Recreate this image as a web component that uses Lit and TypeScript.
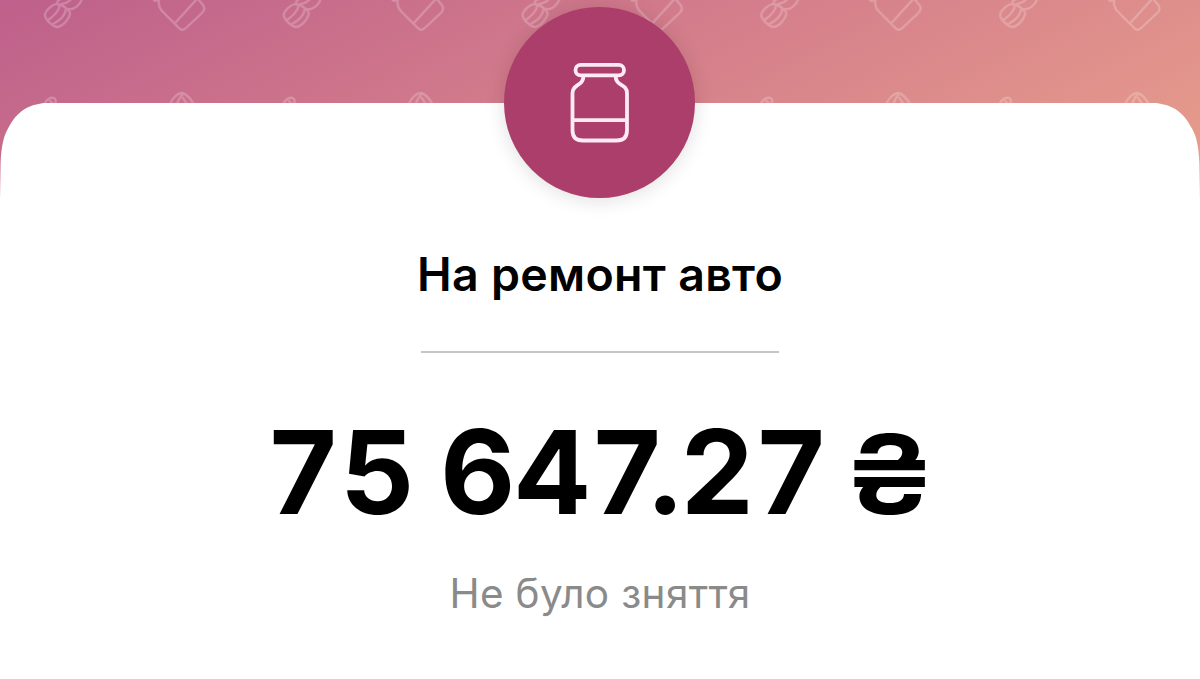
import { LitElement, html, css, svg } from 'lit';
import { customElement, property } from 'lit/decorators.js';

// Tiled doodles behind the card
@customElement('doodle-backdrop')
class DoodleBackdrop extends LitElement {
  static styles = css`
    :host {
      display: block;
    }
    svg {
      display: block;
      width: 100%;
      height: 100%;
    }
    .doodle {
      fill: none;
      stroke: #fff;
      stroke-width: 2.3;
      stroke-linecap: round;
      stroke-linejoin: round;
      opacity: 0.22;
    }
  `;

  renderTile() {
    return svg`
      <g class="doodle">
        <path d="M56 4 C52 5 46 10 45 14 C44 19 53 27 58 27 C63 26 69 19 70 14 C70 10 62 4 56 4 Z"></path>
        <path d="M60 5 C59 11 53 17 48 20 M66 9 C65 16 59 21 53 24"></path>
        <path d="M57 4 C57 1 58 0 61 -1 M62 4 C67 3 70 1 72 -2 M69 9 C74 10 80 5 82 -1"></path>
        <path d="M153 -1 L155 1 L159 0 C158 5 160 9 163 12 L178 27 Q182 32 186 28 L202 13 Q206 9 203 5 L198 -1 M176 22 L196 0"></path>
        <path d="M45 103 C47 99 51 97 54 98 C56 99 56 102 55 105 M50 101 L54 105"></path>
        <path d="M170 104 C172 98 178 93 182 93 C187 94 190 98 193 103 M177 104 C178 100 180 97 183 94 M183 98 L187 104"></path>
      </g>
    `;
  }

  render() {
    return html`
      <svg>
        <defs>
          <pattern id="tile" width="238.8" height="210" patternUnits="userSpaceOnUse">
            ${this.renderTile()}
          </pattern>
        </defs>
        <rect width="100%" height="100%" fill="url(#tile)"></rect>
      </svg>
    `;
  }
}

// Round badge with the jar icon
@customElement('jar-badge')
class JarBadge extends LitElement {
  static styles = css`
    :host {
      display: grid;
      place-items: center;
      width: 191px;
      height: 191px;
      margin-right: 1px;
      border-radius: 50%;
      background: #ab3e6a;
      box-shadow: 0 2px 20px rgba(0, 0, 0, 0.13);
    }
    svg {
      display: block;
      fill: none;
      stroke: #fdeaf4;
      stroke-width: 3.8;
      stroke-linejoin: round;
    }
  `;

  render() {
    return html`
      <svg width="64" height="84" viewBox="568 60.8 64 84">
        <rect x="575.5" y="64.7" width="48.5" height="10.5" rx="5.2"></rect>
        <path d="M583.5 75 C583.5 87 572.5 83 572.5 93 V130 Q572.5 140.3 583 140.3 H616.5 Q627 140.3 627 130 V93 C627 83 615.5 87 615.5 75"></path>
        <path d="M572.5 120 H627"></path>
      </svg>
    `;
  }
}

@customElement('app-root')
class AppRoot extends LitElement {
  @property() name = 'На ремонт авто';
  @property() whole = '75 647';
  @property() cents = '.27';
  @property() currency = '₴';
  @property() note = 'Не було зняття';

  static styles = css`
    :host {
      display: flex;
      flex-direction: column;
      position: relative;
      box-sizing: border-box;
      height: 679px;
      padding-top: 102.5px;
      overflow: hidden;
      background: linear-gradient(153deg, #be608b 0%, #d57f8b 50%, #e89f8b 100%) 0 0 / 100% 200px no-repeat;
      font-family: Inter, 'Liberation Sans', sans-serif;
      color: #000;
    }
    doodle-backdrop {
      position: absolute;
      inset: 0 0 auto;
      height: 200px;
    }
    .card {
      position: relative;
      flex: 1;
      background: #fff;
      clip-path: path('M0 98 L0.6 60 C1.5 42 4 33 8 26 C17 9 28 0.5 52 0 H1148 C1172 0.5 1183 9 1192 26 C1196 33 1198.5 42 1199.4 60 L1200 98 V600 H0 Z');
    }
    .content {
      position: absolute;
      inset: 0;
      display: flex;
      flex-direction: column;
      align-items: center;
      padding-top: 7px;
    }
    .name {
      margin: 48px 0 0;
      font-size: 46.5px;
      line-height: 56px;
      font-weight: 600;
      letter-spacing: 0.3px;
      white-space: nowrap;
    }
    .divider {
      width: 358px;
      height: 2px;
      margin-top: 49px;
      background: #c6c6c6;
    }
    .amount {
      display: flex;
      align-items: baseline;
      margin-top: 49px;
      padding-right: 6px;
      font-size: 116px;
      line-height: 140px;
      font-weight: 690;
      font-kerning: none;
      font-variant-numeric: tabular-nums;
      letter-spacing: -0.2px;
      word-spacing: -6px;
      white-space: nowrap;
    }
    .cents {
      margin-left: -15px;
      letter-spacing: -1px;
    }
    .currency {
      margin-left: 23.5px;
      font-size: 110px;
      font-weight: 590;
      transform: scaleX(1.16);
    }
    .note {
      margin: 25px 0 0;
      font-size: 40.5px;
      line-height: 50px;
      letter-spacing: 0.35px;
      color: #8a8a8a;
      white-space: nowrap;
    }
  `;

  render() {
    return html`
      <doodle-backdrop></doodle-backdrop>
      <div class="card"></div>
      <div class="content">
        <jar-badge></jar-badge>
        <h1 class="name">${this.name}</h1>
        <div class="divider"></div>
        <div class="amount">
          <span>${this.whole}</span>
          <span class="cents">${this.cents}</span>
          <span class="currency">${this.currency}</span>
        </div>
        <p class="note">${this.note}</p>
      </div>
    `;
  }
}
